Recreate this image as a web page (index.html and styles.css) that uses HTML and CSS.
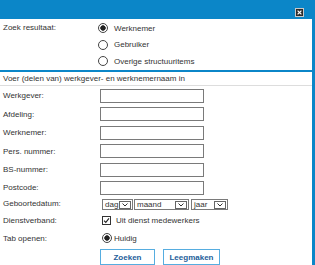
FILE: index.html
```html
<!DOCTYPE html>
<html lang="nl">
<head>
  <meta charset="UTF-8">
  <title>Zoeken</title>
  <link rel="stylesheet" href="styles.css">
</head>
<body>
  <div class="window">
    <div class="titlebar">
      <button class="close" title="Sluiten">
        <svg width="9" height="9" viewBox="0 0 9 9"><rect x="0" y="0" width="9" height="9" fill="#c8c8c8"/><rect x="1" y="1" width="7" height="7" fill="#2b2b2b"/><path d="M2.6 2.6 L6.4 6.4 M6.4 2.6 L2.6 6.4" stroke="#fff" stroke-width="1.2"/></svg>
      </button>
    </div>
    <div class="panel">
      <div class="result">
        <div class="result-label">Zoek resultaat:</div>
        <div class="options">
          <label class="opt"><input type="radio" name="soort" checked> Werknemer</label>
          <label class="opt"><input type="radio" name="soort"> Gebruiker</label>
          <label class="opt"><input type="radio" name="soort"> Overige structuuritems</label>
        </div>
      </div>

      <div class="intro">Voer (delen van) werkgever- en werknemernaam in</div>

      <form class="fields">
        <label>Werkgever:</label>
        <input type="text" class="field">
        <label>Afdeling:</label>
        <input type="text" class="field">
        <label>Werknemer:</label>
        <input type="text" class="field">
        <label>Pers. nummer:</label>
        <input type="text" class="field">
        <label>BS-nummer:</label>
        <input type="text" class="field">
        <label>Postcode:</label>
        <input type="text" class="field">

        <label class="date-label">Geboortedatum:</label>
        <div class="date">
          <div class="sel sel-dag"><span>dag</span><span class="arrow"><svg width="6" height="4" viewBox="0 0 6 4"><path d="M0.5 0.5 L3 3 L5.5 0.5" fill="none" stroke="#333" stroke-width="1"/></svg></span></div>
          <div class="sel sel-maand"><span>maand</span><span class="arrow"><svg width="6" height="4" viewBox="0 0 6 4"><path d="M0.5 0.5 L3 3 L5.5 0.5" fill="none" stroke="#333" stroke-width="1"/></svg></span></div>
          <div class="sel sel-jaar"><span>jaar</span><span class="arrow"><svg width="6" height="4" viewBox="0 0 6 4"><path d="M0.5 0.5 L3 3 L5.5 0.5" fill="none" stroke="#333" stroke-width="1"/></svg></span></div>
        </div>

        <label>Dienstverband:</label>
        <label class="check">
          <svg width="9" height="9" viewBox="0 0 9 9"><rect x="0.5" y="0.5" width="8" height="8" fill="#fff" stroke="#333"/><path d="M2 4.6 L3.8 6.4 L7 2.4" fill="none" stroke="#222" stroke-width="1.1"/></svg>
          Uit dienst medewerkers
        </label>

        <label>Tab openen:</label>
        <label class="opt opt-tab"><input type="radio" name="tab" checked> Huidig</label>

        <div class="buttons">
          <button type="button" class="btn btn-zoek">Zoeken</button>
          <button type="button" class="btn btn-leeg">Leegmaken</button>
        </div>
      </form>
    </div>
  </div>
</body>
</html>
```

FILE: styles.css
```css
body {
  margin: 0;
  font-family: 'Liberation Sans', Arial, sans-serif;
  font-size: 8px;
  color: #333;
  background-color: #fff;
}
.window {
  width: 315px;
  height: 265px;
  overflow: hidden;
  display: flex;
  flex-direction: column;
}
.titlebar {
  height: 19px;
  flex: none;
  background-color: #0b86c8;
  display: flex;
  justify-content: flex-end;
  align-items: flex-start;
  padding: 8px 11px 0 0;
  box-sizing: border-box;
}
.close {
  width: 9px;
  height: 9px;
  padding: 0;
  border: none;
  background: none;
  display: block;
  cursor: pointer;
}
.close svg {
  display: block;
}
.panel {
  flex: 1;
  background-color: #fff;
  border-right: 3px solid #0b86c8;
}
.result {
  display: grid;
  grid-template-columns: 98px 1fr;
  height: 51px;
  padding-top: 1px;
  box-sizing: border-box;
}
.result-label {
  padding-left: 3px;
  height: 16.5px;
  line-height: 15px;
}
.opt {
  display: flex;
  align-items: center;
  height: 16.5px;
}
.opt input {
  appearance: none;
  -webkit-appearance: none;
  width: 10px;
  height: 10px;
  margin: 0 6px 0 0;
  border: 1px solid #444;
  border-radius: 50%;
  background: #fff;
  box-sizing: border-box;
}
.opt input:checked {
  background: radial-gradient(circle, #222 0, #222 2.4px, #fff 3px);
}
.intro {
  border-top: 2px solid #0b86c8;
  border-bottom: 1px solid #ddd;
  height: 13px;
  line-height: 13px;
  padding-left: 3px;
}
.fields {
  display: grid;
  grid-template-columns: 97px auto;
  grid-template-rows: repeat(6, 18.4px) 15px 16px 20px auto;
  align-items: center;
  justify-items: start;
  padding: 0.8px 0 0 3px;
  margin: 0;
}
.field {
  width: 104px;
  height: 14px;
  border: 1px solid #7a7a7a;
  padding: 0 2px;
  box-sizing: border-box;
  font: inherit;
  display: block;
}
.date-label {
  margin-top: -2px;
}
.date {
  display: flex;
  margin-left: 2px;
}
.sel {
  display: flex;
  align-items: center;
  justify-content: space-between;
  height: 11px;
  border: 1px solid #7a7a7a;
  padding: 0 1px 0 2px;
  box-sizing: border-box;
  line-height: 9px;
}
.sel-dag {
  width: 31px;
}
.sel-maand {
  width: 55px;
  margin-left: 1px;
}
.sel-jaar {
  width: 37px;
  margin-left: 2px;
}
.arrow {
  width: 12px;
  height: 8px;
  border: 1px solid #666;
  box-sizing: border-box;
  display: flex;
  align-items: center;
  justify-content: center;
  background-color: #fff;
}
.arrow svg {
  display: block;
}
.check {
  display: flex;
  align-items: center;
  gap: 5px;
  margin-left: 2px;
}
.check svg {
  display: block;
}
.opt-tab {
  margin-left: 2px;
}
.opt-tab input {
  margin-right: 2px;
}
.buttons {
  grid-column: 2;
  display: flex;
  gap: 8px;
  margin-top: 1px;
}
.btn {
  height: 16px;
  padding: 0;
  border: 1px solid #56ade0;
  background-color: #fff;
  color: #1d5e9a;
  font-family: inherit;
  font-size: 8px;
  font-weight: bold;
  cursor: pointer;
}
.btn-zoek {
  width: 55px;
}
.btn-leeg {
  width: 57px;
}
```
